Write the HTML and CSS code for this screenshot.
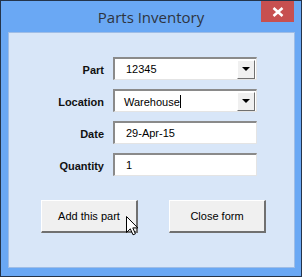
FILE: index.html
```html
<!DOCTYPE html>
<html lang="en">
<head>
  <meta charset="UTF-8">
  <title>Parts Inventory</title>
  <link rel="stylesheet" href="styles.css">
</head>
<body>
  <div class="window">
    <div class="titlebar">
      <span class="title">Parts Inventory</span>
      <div class="close">
        <svg width="12" height="10" viewBox="0 0 12 10">
          <path d="M1.5 1 L10.5 9 M10.5 1 L1.5 9" stroke="#fff" stroke-width="2.6" fill="none"/>
        </svg>
      </div>
    </div>
    <div class="client">
      <div class="form">
        <label>Part</label>
        <div class="field combo">
          <span class="value">12345</span>
          <span class="drop"><i></i></span>
        </div>

        <label>Location</label>
        <div class="field combo">
          <span class="value loc">Warehouse<b class="caret"></b></span>
          <span class="drop"><i></i></span>
        </div>

        <label>Date</label>
        <div class="field text"><span class="value">29-Apr-15</span></div>

        <label>Quantity</label>
        <div class="field text"><span class="value">1</span></div>
      </div>

      <div class="buttons">
        <button class="btn btn-add">Add this part</button>
        <button class="btn btn-close">Close form</button>
      </div>

      <!-- mouse pointer over the first button -->
      <svg class="pointer" width="13" height="20" viewBox="0 0 13 20">
        <path d="M0.5 0.5 L0.5 16.5 L4.3 12.8 L7 18.8 L9.4 17.8 L6.8 11.9 L11.8 11.9 Z" fill="#fff" stroke="#000" stroke-width="1"/>
      </svg>
    </div>
  </div>
</body>
</html>
```

FILE: styles.css
```css
body {
  margin: 0;
  font-family: "Liberation Sans", Arial, sans-serif;
}
.window {
  width: 300px;
  height: 275px;
  border: 1px solid #24344a;
  background: #6aa8f4;
  display: flex;
  flex-direction: column;
}
.titlebar {
  position: relative;
  height: 31px;
  display: flex;
  justify-content: center;
  align-items: center;
}
.title {
  font-family: "Open Sans", "Noto Sans", sans-serif;
  font-size: 15px;
  color: #2e3440;
  margin-top: 1px;
}
.close {
  position: absolute;
  top: 0;
  right: 7px;
  width: 33px;
  height: 21px;
  background: #c75050;
  display: flex;
  justify-content: center;
  align-items: center;
}
.client {
  position: relative;
  flex: 1;
  margin: 0 6px 8px 7px;
  background: #d8e6f8;
  border: 1px solid #9fbde6;
}
.form {
  display: grid;
  grid-template-columns: 95px 144px;
  column-gap: 9px;
  row-gap: 9px;
  margin-top: 24px;
}
.form label {
  font-size: 11px;
  font-weight: bold;
  color: #111;
  text-align: right;
  align-self: center;
  margin-top: 2px;
}
.field {
  height: 23px;
  box-sizing: border-box;
  background: #fff;
  border-top: 2px solid #8a8a8a;
  border-left: 2px solid #8a8a8a;
  border-bottom: 1px solid #e4e4e4;
  border-right: 1px solid #e4e4e4;
  display: flex;
  align-items: center;
  font-size: 11px;
  color: #000;
}
.field .value {
  flex: 1;
  padding-left: 11px;
}
.field .loc {
  padding-left: 9px;
}
.caret {
  display: inline-block;
  width: 1px;
  height: 13px;
  background: #000;
  vertical-align: -2px;
}
.drop {
  width: 18px;
  height: 19px;
  margin-right: 1px;
  box-sizing: border-box;
  background: #f0f0f0;
  border-top: 1px solid #fff;
  border-left: 1px solid #fff;
  border-bottom: 1px solid #707070;
  border-right: 1px solid #707070;
  display: flex;
  justify-content: center;
  align-items: center;
}
.drop i {
  width: 0;
  height: 0;
  border-left: 4px solid transparent;
  border-right: 4px solid transparent;
  border-top: 4px solid #000;
}
.buttons {
  display: flex;
  gap: 31px;
  margin: 24px 0 0 32px;
}
.btn {
  width: 97px;
  height: 33px;
  box-sizing: border-box;
  padding: 0;
  background: #f0f0f0;
  border-top: 1px solid #fff;
  border-left: 1px solid #fff;
  border-bottom: 2px solid #707070;
  border-right: 2px solid #707070;
  font-family: "Liberation Sans", Arial, sans-serif;
  font-size: 11px;
  color: #000;
  cursor: pointer;
}
.pointer {
  position: absolute;
  left: 117px;
  top: 183px;
}
```
